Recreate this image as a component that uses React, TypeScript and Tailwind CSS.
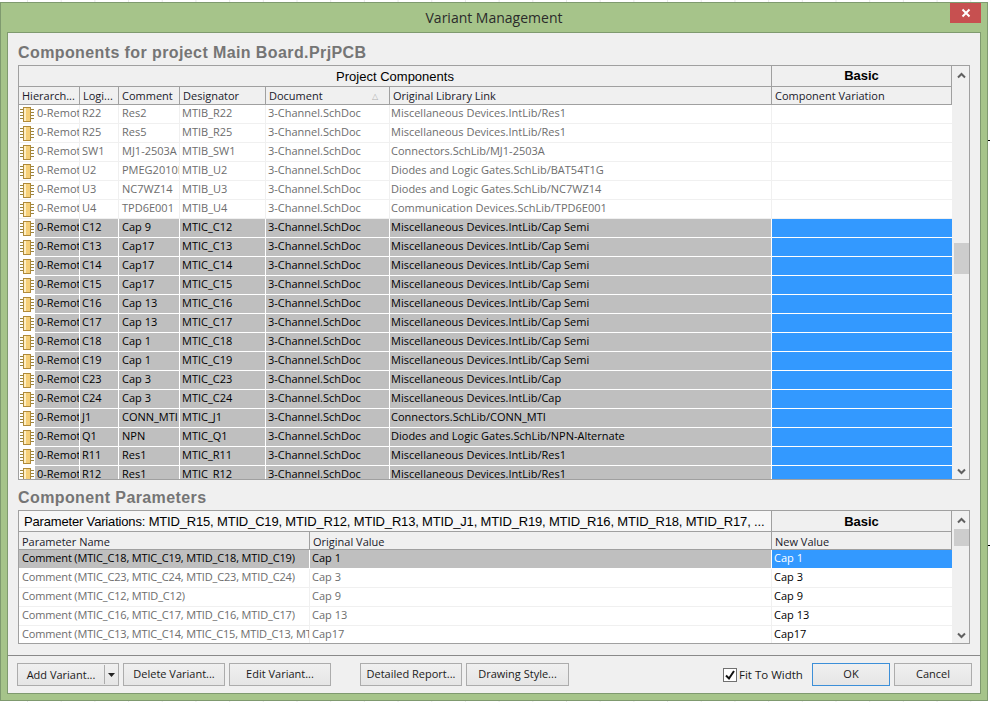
const top = [
  ['R22', 'Res2', 'MTIB_R22', 'Miscellaneous Devices.IntLib/Res1'],
  ['R25', 'Res5', 'MTIB_R25', 'Miscellaneous Devices.IntLib/Res1'],
  ['SW1', 'MJ1-2503A', 'MTIB_SW1', 'Connectors.SchLib/MJ1-2503A'],
  ['U2', 'PMEG2010E', 'MTIB_U2', 'Diodes and Logic Gates.SchLib/BAT54T1G'],
  ['U3', 'NC7WZ14', 'MTIB_U3', 'Diodes and Logic Gates.SchLib/NC7WZ14'],
  ['U4', 'TPD6E001', 'MTIB_U4', 'Communication Devices.SchLib/TPD6E001'],
];
const selected = [
  ['C12', 'Cap 9', 'MTIC_C12', 'Miscellaneous Devices.IntLib/Cap Semi'],
  ['C13', 'Cap17', 'MTIC_C13', 'Miscellaneous Devices.IntLib/Cap Semi'],
  ['C14', 'Cap17', 'MTIC_C14', 'Miscellaneous Devices.IntLib/Cap Semi'],
  ['C15', 'Cap17', 'MTIC_C15', 'Miscellaneous Devices.IntLib/Cap Semi'],
  ['C16', 'Cap 13', 'MTIC_C16', 'Miscellaneous Devices.IntLib/Cap Semi'],
  ['C17', 'Cap 13', 'MTIC_C17', 'Miscellaneous Devices.IntLib/Cap Semi'],
  ['C18', 'Cap 1', 'MTIC_C18', 'Miscellaneous Devices.IntLib/Cap Semi'],
  ['C19', 'Cap 1', 'MTIC_C19', 'Miscellaneous Devices.IntLib/Cap Semi'],
  ['C23', 'Cap 3', 'MTIC_C23', 'Miscellaneous Devices.IntLib/Cap'],
  ['C24', 'Cap 3', 'MTIC_C24', 'Miscellaneous Devices.IntLib/Cap'],
  ['J1', 'CONN_MTI', 'MTIC_J1', 'Connectors.SchLib/CONN_MTI'],
  ['Q1', 'NPN', 'MTIC_Q1', 'Diodes and Logic Gates.SchLib/NPN-Alternate'],
  ['R11', 'Res1', 'MTIC_R11', 'Miscellaneous Devices.IntLib/Res1'],
  ['R12', 'Res1', 'MTIC_R12', 'Miscellaneous Devices.IntLib/Res1'],
];
const params = [
  ['Comment (MTIC_C18, MTIC_C19, MTID_C18, MTID_C19)', 'Cap 1'],
  ['Comment (MTIC_C23, MTIC_C24, MTID_C23, MTID_C24)', 'Cap 3'],
  ['Comment (MTIC_C12, MTID_C12)', 'Cap 9'],
  ['Comment (MTIC_C16, MTIC_C17, MTID_C16, MTID_C17)', 'Cap 13'],
  ['Comment (MTIC_C13, MTIC_C14, MTIC_C15, MTID_C13, MTID_C14, MTID_C15)', 'Cap17'],
];

function Chip() {
  return (
    <svg width="14" height="15" viewBox="0 0 14 15" className="shrink-0">
      <path d="M0 2.5h3M0 5.5h3M0 8.5h3M0 11.5h3M11 2.5h3M11 5.5h3M11 8.5h3M11 11.5h3" stroke="#9a8540" strokeWidth="1" />
      <rect x="3.5" y="0.5" width="7" height="14" fill="#f5cf78" stroke="#b08a38" />
      <rect x="4" y="1" width="2" height="13" fill="#fdeec4" />
    </svg>
  );
}

function Cell({ w, children, className = '' }: { w: string; children?: React.ReactNode; className?: string }) {
  return <div className={`${w} shrink-0 overflow-hidden whitespace-nowrap pl-[3px] border-r ${className}`}>{children}</div>;
}

function Scrollbar({ thumb }: { thumb: string }) {
  return (
    <div className="w-[17px] shrink-0 flex flex-col items-center bg-[#f0f0f0] border-l border-[#f0f0f0]">
      <svg width="9" height="7" viewBox="0 0 9 7" className="mt-[6px] shrink-0">
        <path d="M1 5.5 4.5 2 8 5.5" fill="none" stroke="#606060" strokeWidth="2" />
      </svg>
      <div className={`w-[15px] bg-[#cdcdcd] ${thumb}`} />
      <div className="flex-1" />
      <svg width="9" height="7" viewBox="0 0 9 7" className="mb-[4px] shrink-0">
        <path d="M1 1.5 4.5 5 8 1.5" fill="none" stroke="#606060" strokeWidth="2" />
      </svg>
    </div>
  );
}

function Button({ w, children, className = '' }: { w: string; children: React.ReactNode; className?: string }) {
  return (
    <button className={`${w} h-[23px] shrink-0 border border-[#acacac] bg-gradient-to-b from-[#f0f0f0] to-[#e5e5e5] text-[11px] text-[#1a1a1a] ${className}`}>
      {children}
    </button>
  );
}

function ComponentRow({ row, sel }: { row: string[]; sel: boolean }) {
  const line = sel ? 'border-white' : 'border-[#f0f0f0]';
  return (
    <div className={`flex h-[19px] shrink-0 border-b leading-[16px] ${line} ${sel ? 'text-black' : 'text-[#6d6d6d]'}`}>
      <div className="w-[16px] shrink-0 bg-white flex items-center pl-[1px]"><Chip /></div>
      <div className={`flex flex-1 ${sel ? 'bg-[#bfbfbf]' : 'bg-white'}`}>
        <Cell w="w-[45px]" className={`!pl-[2px] ${line}`}>0-Remote</Cell>
        <Cell w="w-[39px]" className={`!pl-[2px] ${line}`}>{row[0]}</Cell>
        <Cell w="w-[61px]" className={line}>{row[1]}</Cell>
        <Cell w="w-[86px]" className={`!pl-[2px] ${line}`}>{row[2]}</Cell>
        <Cell w="w-[124px]" className={`!pl-[2px] ${line}`}>3-Channel.SchDoc</Cell>
        <Cell w="w-[382px]" className={`!pl-[1px] ${line}`}>{row[3]}</Cell>
      </div>
      <div className={`w-[180px] shrink-0 ${sel ? 'bg-[#3399ff]' : 'bg-white'}`} />
    </div>
  );
}

export default function App() {
  return (
    <div className="relative w-[990px] h-[702px] overflow-hidden bg-white bg-[linear-gradient(90deg,#e8e8e8_1px,transparent_1px)] bg-[size:33.7px_100%] bg-[position:27px_0] pt-[2px] pr-[2px] font-['Open_Sans',sans-serif] text-[11px]">
      <div className="absolute left-[988px] top-[140px] w-[2px] h-[1px] bg-black" />
      <div className="absolute left-[988px] top-[545px] w-[2px] h-[1px] bg-black" />
      <div className="h-[699px] flex flex-col bg-[#a6c48a] border border-[#7f9a6f]">
        <div className="h-[29px] shrink-0 flex items-start relative">
          <div className="flex-1 text-center text-[14px] leading-[30px] text-[#2b2b2b]">Variant Management</div>
          <div className="absolute right-[6px] top-0 w-[31px] h-[20px] bg-[#c75050] flex items-center justify-center">
            <svg width="10" height="10" viewBox="0 0 10 10">
              <path d="M1.5 1.5 8.5 8.5M8.5 1.5 1.5 8.5" stroke="#fff" strokeWidth="2" />
            </svg>
          </div>
        </div>
        <div className="mx-[6px] mb-[6px] flex-1 flex flex-col bg-[#f0f0f0] border border-[#7f9a6f]">
          <div className="px-[10px] flex flex-col">
            <h1 className="h-[32px] leading-[39px] font-['Liberation_Sans',sans-serif] font-bold text-[16px] tracking-[0.4px] text-[#757575]">
              Components for project Main Board.PrjPCB
            </h1>
            <div className="h-[415px] flex border border-[#a0a0a0] bg-white">
              <div className="flex-1 min-w-0 flex flex-col overflow-hidden">
                <div className="h-[21px] shrink-0 flex border-b border-[#a0a0a0] bg-[#f0f0f0] font-['Liberation_Sans',sans-serif] text-[13px] text-black">
                  <div className="flex-1 text-center leading-[21px] border-r border-[#a0a0a0]">Project Components</div>
                  <div className="w-[180px] shrink-0 text-center leading-[20px] font-bold text-[13px] border-r border-[#a0a0a0]">Basic</div>
                </div>
                <div className="h-[18px] shrink-0 flex border-b border-[#a0a0a0] bg-[#f0f0f0] leading-[17px] text-[#1a1a2a]">
                  <Cell w="w-[61px]" className="border-[#a0a0a0]">Hierarch...</Cell>
                  <Cell w="w-[39px]" className="border-[#a0a0a0]">Logi...</Cell>
                  <Cell w="w-[61px]" className="border-[#a0a0a0]">Comment</Cell>
                  <Cell w="w-[86px]" className="border-[#a0a0a0]">Designator</Cell>
                  <Cell w="w-[124px]" className="border-[#a0a0a0] flex justify-between pr-[11px]">
                    <span>Document</span>
                    <span className="text-[8px] text-[#b0b0b0]">△</span>
                  </Cell>
                  <Cell w="w-[382px]" className="border-[#a0a0a0]">Original Library Link</Cell>
                  <div className="w-[180px] shrink-0 pl-[3px] border-r border-[#a0a0a0]">Component Variation</div>
                </div>
                {top.map((r) => <ComponentRow key={r[0]} row={r} sel={false} />)}
                {selected.map((r) => <ComponentRow key={r[0]} row={r} sel />)}
              </div>
              <Scrollbar thumb="h-[31px] mt-[164px]" />
            </div>
            <h2 className="h-[30px] leading-[36px] font-['Liberation_Sans',sans-serif] font-bold text-[16px] tracking-[0.4px] text-[#757575]">
              Component Parameters
            </h2>
            <div className="h-[134px] flex border border-[#a0a0a0] bg-white">
              <div className="flex-1 min-w-0 flex flex-col overflow-hidden">
                <div className="h-[21px] shrink-0 flex border-b border-[#a0a0a0] font-['Liberation_Sans',sans-serif] text-[13px] text-black">
                  <div className="flex-1 overflow-hidden whitespace-nowrap pl-[5px] leading-[22px] tracking-[-0.17px] border-r border-[#a0a0a0] bg-[#f7f7f7]">
                    Parameter Variations: MTID_R15, MTID_C19, MTID_R12, MTID_R13, MTID_J1, MTID_R19, MTID_R16, MTID_R18, MTID_R17, ...
                  </div>
                  <div className="w-[180px] shrink-0 text-center leading-[22px] font-bold text-[13px] bg-[#f0f0f0] border-r border-[#a0a0a0]">Basic</div>
                </div>
                <div className="h-[18px] shrink-0 flex border-b border-[#a0a0a0] bg-[#f0f0f0] leading-[19px] text-[#1a1a2a]">
                  <Cell w="w-[291px]" className="border-[#a0a0a0]">Parameter Name</Cell>
                  <Cell w="w-[462px]" className="border-[#a0a0a0]">Original Value</Cell>
                  <div className="w-[180px] shrink-0 pl-[3px] border-r border-[#a0a0a0]">New Value</div>
                </div>
                {params.map((p, i) => (
                  <div key={p[0]} className={`flex h-[19px] shrink-0 border-b leading-[16px] ${i === 0 ? 'border-white bg-[#bfbfbf] text-black' : 'border-[#f0f0f0] text-[#6d6d6d]'}`}>
                    <Cell w="w-[291px]" className={`!pl-[3px] tracking-[-0.16px] ${i === 0 ? 'border-white' : 'border-[#f0f0f0]'}`}>{p[0]}</Cell>
                    <Cell w="w-[462px]" className={`!pl-[2px] ${i === 0 ? 'border-white' : 'border-[#f0f0f0]'}`}>{p[1]}</Cell>
                    <div className={`w-[180px] shrink-0 pl-[2px] ${i === 0 ? 'bg-[#3399ff] text-white' : 'bg-white text-black'}`}>{p[1]}</div>
                  </div>
                ))}
              </div>
              <Scrollbar thumb="h-[17px] mt-[5px]" />
            </div>
          </div>
          <div className="mt-[11px] h-[2px] shrink-0 border-t border-[#8a8a8a] border-b-white" />
          <div className="pl-[9px] pt-[6px] flex items-center">
            <div className="w-[102px] h-[23px] flex shrink-0 border border-[#acacac] bg-gradient-to-b from-[#f0f0f0] to-[#e5e5e5] text-[11px] text-[#1a1a1a]">
              <div className="flex-1 text-center leading-[19px] border-r border-[#acacac] my-[1px]">Add Variant...</div>
              <div className="w-[13px] flex items-center justify-center">
                <svg width="7" height="4" viewBox="0 0 7 4"><path d="M0 0h7L3.5 4z" fill="#222" /></svg>
              </div>
            </div>
            <Button w="w-[102px]" className="ml-[4px]">Delete Variant...</Button>
            <Button w="w-[102px]" className="ml-[4px]">Edit Variant...</Button>
            <Button w="w-[102px]" className="ml-[29px]">Detailed Report...</Button>
            <Button w="w-[103px]" className="ml-[4px]">Drawing Style...</Button>
            <div className="ml-[154px] w-[14px] h-[14px] shrink-0 border border-[#707070] bg-white flex items-center justify-center">
              <svg width="12" height="12" viewBox="0 0 12 12"><path d="M2 6.5 5 9.5 10 2" fill="none" stroke="#111" strokeWidth="2" /></svg>
            </div>
            <span className="ml-[2px] text-[11.5px] w-[73px] shrink-0 text-[#1a1a1a]">Fit To Width</span>
            <Button w="w-[78px]" className="!border-[#3c8fd8]">OK</Button>
            <Button w="w-[78px]" className="ml-[4px]">Cancel</Button>
          </div>
        </div>
      </div>
    </div>
  );
}
